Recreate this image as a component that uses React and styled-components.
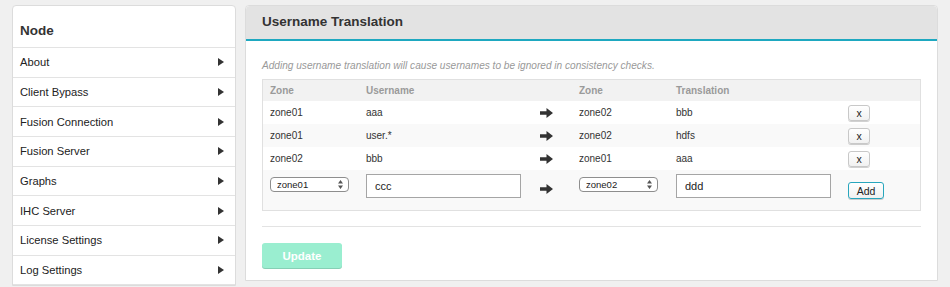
import React from 'react';
import styled, { createGlobalStyle } from 'styled-components';

const GlobalStyle = createGlobalStyle`
    html, body {
        margin: 0;
        padding: 0;
        background: #f0f0f0;
        font-family: "Liberation Sans", Arial, sans-serif;
        color: #333;
        overflow: hidden;
    }
`;

const Page = styled.div`
    display: flex;
    gap: 9px;
    padding: 5px 12px 0 12px;
    height: 287px;
    box-sizing: border-box;
    align-items: flex-start;
`;

const Sidebar = styled.nav`
    width: 224px;
    flex: none;
    background: #fff;
    border: 1px solid #dcdcdc;
    border-radius: 4px 4px 0 0;
    box-sizing: border-box;
`;

const SideTitle = styled.h3`
    margin: 0;
    height: 41px;
    padding: 17px 0 0 7px;
    box-sizing: border-box;
    font-size: 13.5px;
    font-weight: bold;
    color: #333;
`;

const SideItem = styled.div`
    display: flex;
    align-items: center;
    justify-content: space-between;
    height: 29.7px;
    padding: 0 11px 0 7px;
    border-top: 1px solid #e3e3e3;
    box-sizing: border-box;
    font-size: 11.2px;
    color: #222;

    &:last-child {
        border-bottom: 1px solid #e3e3e3;
    }
`;

const Caret = styled.span`
    width: 0;
    height: 0;
    border-top: 4px solid transparent;
    border-bottom: 4px solid transparent;
    border-left: 6px solid #333;
`;

const Panel = styled.section`
    flex: 1;
    background: #fff;
    border: 1px solid #dcdcdc;
    border-radius: 4px 4px 0 0;
    box-sizing: border-box;
`;

const PanelHeader = styled.header`
    height: 35px;
    background: #e3e3e3;
    border-bottom: 2px solid #1ea8c0;
    border-radius: 4px 4px 0 0;
    padding: 8px 0 0 16px;
    box-sizing: border-box;
    font-size: 13.5px;
    font-weight: bold;
    color: #333;
`;

const PanelBody = styled.div`
    padding: 18px 16px 12px 16px;
`;

const Note = styled.p`
    margin: 0 0 7px 0;
    font-size: 10.1px;
    line-height: 13px;
    font-style: italic;
    color: #999;
`;

const Table = styled.div`
    border: 1px solid #e0e0e0;
    background: #f9f9f9;
`;

const Row = styled.div`
    display: grid;
    grid-template-columns: 96px 174px 39px 97px 172px 1fr;
    align-items: center;
    padding-left: 7px;
    height: ${p => p.$h || 23}px;
    background: ${p => p.$bg || '#fff'};
    font-size: 10px;
    font-weight: ${p => (p.$head ? 'bold' : 'normal')};
    color: ${p => (p.$head ? '#9a9a9a' : '#333')};
`;

const EditRow = styled(Row)`
    align-items: start;
`;

const Cell = styled.div`
    padding-top: ${p => p.$top || 0}px;
`;

const SelectWrap = styled.div`
    position: relative;
    width: 79px;
    margin-top: 7px;
`;

const Select = styled.select`
    appearance: none;
    width: 79px;
    height: 15px;
    border: 1px solid #8e8e8e;
    border-radius: 4px;
    background: #fff;
    font-family: "Liberation Sans", Arial, sans-serif;
    font-size: 9.5px;
    padding: 0 0 0 6px;
    color: #222;
    box-sizing: border-box;
`;

const SelectArrows = styled.svg`
    position: absolute;
    right: 6px;
    top: 3px;
    pointer-events: none;
`;

const TextInput = styled.input`
    width: 155px;
    height: 24px;
    border: 1px solid #a5a5a5;
    box-sizing: border-box;
    padding: 0 8px;
    margin-top: 4px;
    font-family: "Liberation Sans", Arial, sans-serif;
    font-size: 11px;
    color: #222;
    outline: none;
`;

const SmallButton = styled.button`
    width: ${p => (p.$primary ? 36 : 22)}px;
    height: ${p => (p.$primary ? 17 : 16)}px;
    margin-top: ${p => p.$top || 0}px;
    border: 1px solid ${p => (p.$primary ? '#28a6bd' : '#c8c8c8')};
    border-radius: 3px;
    background: linear-gradient(#fff, #f1f1f1);
    box-shadow: 0 1px 0 rgba(0, 0, 0, 0.18);
    font-family: "Liberation Sans", Arial, sans-serif;
    font-size: 10.5px;
    color: #222;
    padding: 0;
    line-height: 14px;
    display: block;
`;

const Divider = styled.hr`
    margin: 15px 0 16px 0;
    border: none;
    border-top: 1px solid #e3e3e3;
`;

const UpdateButton = styled.button`
    width: 80px;
    height: 25px;
    border: none;
    border-radius: 3px;
    background: #9aeed0;
    box-shadow: 0 1px 0 #86cfb5;
    color: #fff;
    font-family: "Liberation Sans", Arial, sans-serif;
    font-size: 11.5px;
    font-weight: bold;
    display: block;
`;

const Arrow = () => (
    <svg width="13" height="10" viewBox="0 0 13 10">
        <path d="M0 3.2 H6.5 V0 L13 5 L6.5 10 V6.8 H0 Z" fill="#333" />
    </svg>
);

const ZoneSelect = ({ value }) => (
    <SelectWrap>
        <Select defaultValue={value}>
            <option>zone01</option>
            <option>zone02</option>
        </Select>
        <SelectArrows width="5" height="9" viewBox="0 0 5 9">
            <path d="M2.5 0 L5 3.5 H0 Z M2.5 9 L5 5.5 H0 Z" fill="#555" />
        </SelectArrows>
    </SelectWrap>
);

const menu = [
    'About',
    'Client Bypass',
    'Fusion Connection',
    'Fusion Server',
    'Graphs',
    'IHC Server',
    'License Settings',
    'Log Settings',
];

const rules = [
    ['zone01', 'aaa', 'zone02', 'bbb'],
    ['zone01', 'user.*', 'zone02', 'hdfs'],
    ['zone02', 'bbb', 'zone01', 'aaa'],
];

const App = () => (
    <>
        <GlobalStyle />
        <Page>
            <Sidebar>
                <SideTitle>Node</SideTitle>
                {menu.map(item => (
                    <SideItem key={item}>
                        {item}
                        <Caret />
                    </SideItem>
                ))}
            </Sidebar>
            <Panel>
                <PanelHeader>Username Translation</PanelHeader>
                <PanelBody>
                    <Note>Adding username translation will cause usernames to be ignored in consistency checks.</Note>
                    <Table>
                        <Row $head $h={21} $bg="#f2f2f2">
                            <div>Zone</div>
                            <div>Username</div>
                            <div />
                            <div>Zone</div>
                            <div>Translation</div>
                            <div />
                        </Row>
                        {rules.map((r, i) => (
                            <Row key={i} $bg={i % 2 ? '#f9f9f9' : '#fff'}>
                                <div>{r[0]}</div>
                                <div>{r[1]}</div>
                                <Arrow />
                                <div>{r[2]}</div>
                                <div>{r[3]}</div>
                                <div><SmallButton>x</SmallButton></div>
                            </Row>
                        ))}
                        <EditRow $h={40} $bg="#f9f9f9">
                            <ZoneSelect value="zone01" />
                            <TextInput defaultValue="ccc" />
                            <Cell $top={14}><Arrow /></Cell>
                            <ZoneSelect value="zone02" />
                            <TextInput defaultValue="ddd" />
                            <div><SmallButton $primary $top={12}>Add</SmallButton></div>
                        </EditRow>
                    </Table>
                    <Divider />
                    <UpdateButton>Update</UpdateButton>
                </PanelBody>
            </Panel>
        </Page>
    </>
);

export default App;
